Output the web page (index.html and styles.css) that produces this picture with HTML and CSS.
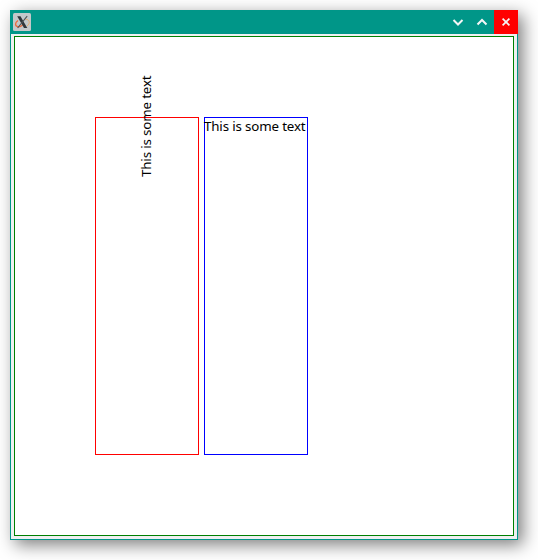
FILE: index.html
```html
<!DOCTYPE html>
<html lang="en">
<head>
<meta charset="utf-8">
<title>Window</title>
<link rel="stylesheet" href="styles.css">
</head>
<body>
<div class="window">
  <header class="titlebar">
    <svg class="app-icon" viewBox="0 0 18 18" width="18" height="18">
      <rect width="18" height="18" rx="1.5" fill="#c3c8ca"/>
      <path d="M5 7.5C1.8 9.5 1.5 13.5 5.5 13.8C7 13.9 8.5 13 9.5 12" fill="none" stroke="#ee6939" stroke-width="1.3"/>
      <path d="M12.5 6.2C17 6.5 17.5 10.5 14 13" fill="none" stroke="#e9ad70" stroke-width="1"/>
      <path d="M4.2 3.2H7.5L14.3 15H11Z" fill="#30363b"/>
      <path d="M14.2 3.2L4.6 15" stroke="#4b5257" stroke-width="1.1"/>
    </svg>
    <div class="controls">
      <span class="control"><svg viewBox="0 0 24 24"><path d="M7.5 10L12 14.5L16.5 10"/></svg></span>
      <span class="control"><svg viewBox="0 0 24 24"><path d="M7.5 14.5L12 10L16.5 14.5"/></svg></span>
      <span class="control close"><svg viewBox="0 0 24 24"><path d="M8.6 8.6L15.4 15.4M15.4 8.6L8.6 15.4"/></svg></span>
    </div>
  </header>
  <main class="client">
    <div class="canvas">
      <div class="box red"><span class="label rotated">This is some text</span></div>
      <div class="box blue"><span class="label">This is some text</span></div>
    </div>
  </main>
</div>
</body>
</html>
```
FILE: styles.css
```css
* { box-sizing: border-box; }
body {
  margin: 0;
  padding: 10px;
  height: 560px;
  overflow: hidden;
  background: #fff;
  font: 13.333px/18px "Noto Sans", sans-serif;
  letter-spacing: -.15px;
  color: #000;
}
.window {
  width: 508px;
  height: 530px;
  border: 1px solid #009688;
  border-top: 0;
  box-shadow: 5px 5px 16px rgba(0, 0, 0, .5);
}
.titlebar {
  display: flex;
  justify-content: space-between;
  align-items: center;
  height: 24px;
  margin: 0 -1px;
  padding-left: 3px;
  background: #009688;
}
.app-icon { display: block; }
.controls { display: flex; }
.control { width: 24px; height: 24px; }
.control svg {
  display: block;
  width: 24px;
  height: 24px;
  fill: none;
  stroke: #f4f6f6;
  stroke-width: 2;
}
.close { background: #f00; }
.close svg { stroke-width: 1.7; }
.client {
  height: 505px;
  padding: 2px 3px 3px;
  background: #eff0f1;
}
.canvas {
  display: flex;
  gap: 5px;
  width: 500px;
  height: 500px;
  padding: 80px;
  border: 1px solid #008000;
  background: #fff;
}
.box {
  width: 104px;
  height: 338px;
  border: 1px solid;
}
.red { border-color: #f00; }
.blue { border-color: #00f; }
.label {
  display: block;
  margin: -1px 0 0 -1px;
  white-space: nowrap;
}
.rotated {
  margin-right: 1px;
  transform: rotate(-90deg);
}
```
